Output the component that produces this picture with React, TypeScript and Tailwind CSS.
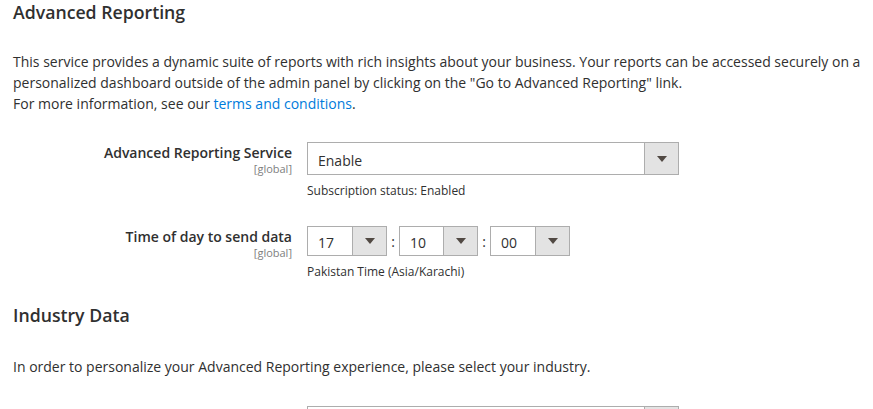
import React from "react";

const font = { fontFamily: '"Open Sans", "Noto Sans", sans-serif' };

function Arrow() {
  return (
    <svg width="10" height="6" viewBox="0 0 10 6" className="block">
      <path d="M0 0 H10 L5 6 Z" fill="#514943" />
    </svg>
  );
}

function Select({ value, w, h }: { value: string; w: string; h: string }) {
  return (
    <div className={`flex ${w} ${h} border border-[#adadad] bg-white`}>
      <div className="flex-1 flex items-center pl-[10px] pt-[3px] text-[14px] text-[#303030]">{value}</div>
      <div className="w-[34px] border-l border-[#adadad] bg-[#e3e3e3] flex items-center justify-center">
        <Arrow />
      </div>
    </div>
  );
}

export default function App() {
  return (
    <div className="w-[873px] h-[409px] overflow-hidden bg-white text-[#303030] pl-[13px] pr-[4px]" style={font}>
      <h2 className="text-[17.7px] leading-[22px] font-semibold text-[#303030] pt-[1px]">Advanced Reporting</h2>
      <p className="mt-[28px] text-[14px] leading-[21px]">
        This service provides a dynamic suite of reports with rich insights about your business. Your reports can be accessed securely on a personalized dashboard outside of the admin panel by clicking on the "Go to Advanced Reporting" link.
        <br />
        For more information, see our <a className="text-[#007bdb]">terms and conditions</a>.
      </p>

      <div className="mt-[28px] flex">
        <div className="w-[279px] text-right pr-0">
          <div className="text-[14px] leading-[20px] font-semibold pt-[1px]">Advanced Reporting Service</div>
          <div className="text-[11px] leading-[12px] text-[#808080]">[global]</div>
        </div>
        <div className="ml-[15px]">
          <Select value="Enable" w="w-[372px]" h="h-[33px]" />
          <div className="mt-[8px] text-[12px] leading-[16px]">Subscription status: Enabled</div>
        </div>
      </div>

      <div className="mt-[27px] flex">
        <div className="w-[279px] text-right">
          <div className="text-[14px] leading-[20px] font-semibold pt-[1px]">Time of day to send data</div>
          <div className="text-[11px] leading-[12px] text-[#808080]">[global]</div>
        </div>
        <div className="ml-[15px]">
          <div className="flex items-center">
            <Select value="17" w="w-[80px]" h="h-[30px]" />
            <span className="w-[12px] text-center text-[14px]">:</span>
            <Select value="10" w="w-[79px]" h="h-[30px]" />
            <span className="w-[12px] text-center text-[14px]">:</span>
            <Select value="00" w="w-[80px]" h="h-[30px]" />
          </div>
          <div className="mt-[8px] text-[12px] leading-[16px]">Pakistan Time (Asia/Karachi)</div>
        </div>
      </div>

      <h2 className="mt-[24px] text-[17.7px] leading-[22px] font-semibold text-[#303030]">Industry Data</h2>
      <p className="mt-[30px] text-[14px] leading-[21px]">
        In order to personalize your Advanced Reporting experience, please select your industry.
      </p>
      <div className="mt-[29px] flex">
        <div className="w-[279px]" />
        <div className="ml-[15px]">
          <Select value="" w="w-[372px]" h="h-[33px]" />
        </div>
      </div>
    </div>
  );
}
